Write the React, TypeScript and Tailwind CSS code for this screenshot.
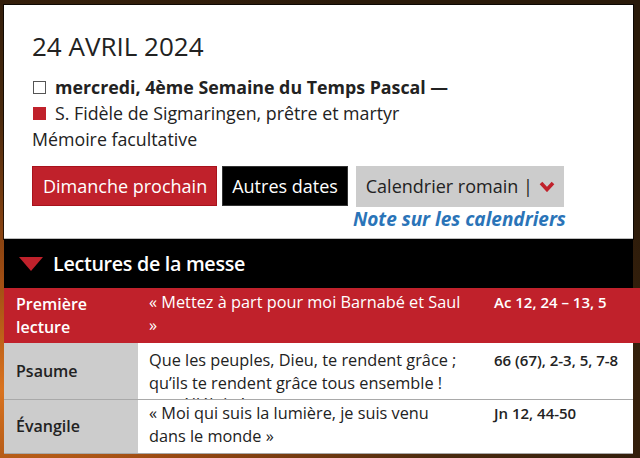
const font = { fontFamily: '"Open Sans", "Liberation Sans", sans-serif' };

function Row({
  label,
  text,
  peek,
  reference,
  red,
  rows,
  pad,
}: {
  label: string;
  text: string[];
  peek?: string;
  reference: string;
  red?: boolean;
  rows: string;
  pad: string;
}) {
  return (
    <div
      className={`grid grid-cols-[134px_345px_1fr] ${rows} overflow-hidden ${
        red ? "w-[636px] bg-[#c0212b] text-white" : "w-[629px] bg-white text-[#222] border-b border-[#a9a9a9]"
      }`}
    >
      <div className={`flex items-center pl-[12px] text-[16px] font-semibold leading-[23px] ${red ? "" : "bg-[#cccccc]"}`}>
        {label}
      </div>
      <div className={`pl-[11px] pr-[19px] ${pad} text-[16.3px] leading-[23px]`}>
        {text.map((t) => (
          <p key={t}>{t}</p>
        ))}
        {peek && <p className="-mt-[2px]">{peek}</p>}
      </div>
      <div className={`pl-[11px] ${pad} text-[15px] font-semibold leading-[23px]`}>{reference}</div>
    </div>
  );
}

export default function App() {
  return (
    <div
      className="w-[640px] h-[458px] overflow-hidden bg-[radial-gradient(ellipse_at_0%_85%,#d9731f_0%,#9a4a12_22%,#4a2a0e_50%,#2a1a0a_80%)] pt-[5px] pl-[4px]"
      style={font}
    >
      {/* Day card */}
      <div className="w-[629px] bg-white shadow-[0_0_0_1px_rgba(0,0,0,0.7)]">
        <div className="px-[28px] pt-[24px] pb-[8px] border-b border-[#bdbdbd] text-[#222]">
          <h1 className="text-[26px] leading-[34px] font-normal">24 AVRIL 2024</h1>

          <div className="mt-[11px] text-[17.8px] leading-[26px]">
            <div className="flex items-center gap-[9px]">
              <span className="w-[13px] h-[13px] border border-[#555] ml-[1px]" />
              <span className="font-bold">mercredi, 4ème Semaine du Temps Pascal —</span>
            </div>
            <div className="flex items-center gap-[9px]">
              <span className="w-[13px] h-[13px] bg-[#c0212b] ml-[1px]" />
              <span>S. Fidèle de Sigmaringen, prêtre et martyr</span>
            </div>
            <div>Mémoire facultative</div>
          </div>

          <div className="mt-[14px] flex items-start gap-[5px] text-[18px]">
            <button className="h-[40px] pl-[10px] pr-[9px] bg-[#c0212b] border border-[#a8121c] text-white">
              Dimanche prochain
            </button>
            <button className="h-[40px] px-[9px] bg-black border border-[#333] text-white">Autres dates</button>
            <div className="flex flex-col items-end">
              <button className="h-[41px] pl-[10px] pr-[9px] bg-[#cccccc] text-[#222] flex items-center gap-[6px]">
                <span>Calendrier romain |</span>
                <svg width="16" height="11" viewBox="0 0 16 11">
                  <polyline points="2,2 8,8.5 14,2" fill="none" stroke="#c0212b" strokeWidth="3.6" />
                </svg>
              </button>
              <a className="mt-[1px] -mr-[2px] text-[19px] leading-[22px] font-bold italic text-[#2a74b8]">
                Note sur les calendriers
              </a>
            </div>
          </div>
        </div>
      </div>

      {/* Readings */}
      <div className="w-[629px] h-[49px] bg-black flex items-center gap-[10px] pl-[15px] text-white">
        <svg width="24" height="14" viewBox="0 0 24 14">
          <polygon points="0,0 24,0 12,14" fill="#c0212b" />
        </svg>
        <span className="text-[19.7px] font-semibold tracking-[-0.3px]">Lectures de la messe</span>
      </div>

      <Row
        red
        label="Première lecture"
        text={["« Mettez à part pour moi Barnabé et Saul »"]}
        reference="Ac 12, 24 – 13, 5"
        rows="grid-rows-[55px] h-[55px]"
        pad="pt-[3px]"
      />
      <Row
        label="Psaume"
        text={["Que les peuples, Dieu, te rendent grâce ; qu’ils te rendent grâce tous ensemble !"]}
        peek="ou : Alléluia !"
        reference="66 (67), 2-3, 5, 7-8"
        rows="grid-rows-[56px] h-[57px]"
        pad="pt-[6px]"
      />
      <Row
        label="Évangile"
        text={["« Moi qui suis la lumière, je suis venu dans le monde »"]}
        reference="Jn 12, 44-50"
        rows="grid-rows-[53px] h-[54px]"
        pad="pt-[2px]"
      />
    </div>
  );
}
